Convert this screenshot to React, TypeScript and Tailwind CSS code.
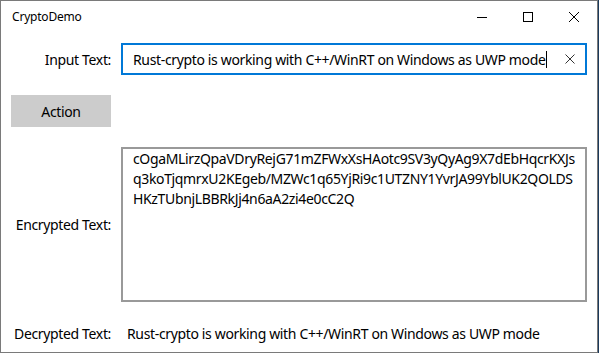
import React from "react";

const font = { fontFamily: '"Noto Sans", "Open Sans", sans-serif' };

export default function App() {
  return (
    <div className="w-[599px] h-[353px] bg-[#1b3a5c] overflow-hidden" style={font}>
      <div className="w-[598px] h-[353px] bg-white border border-[#7a7a7a] flex flex-col text-black">
        {/* Title bar */}
        <div className="h-[31px] flex items-center shrink-0">
          <div className="pl-[11px] text-[12px] tracking-[-0.2px] flex-1">CryptoDemo</div>
          <div className="flex h-full">
            <div className="w-[46px] h-full flex items-center justify-center">
              <svg width="12" height="12" viewBox="0 0 12 12">
                <line x1="1" y1="6.5" x2="11" y2="6.5" stroke="#000" strokeWidth="1" />
              </svg>
            </div>
            <div className="w-[46px] h-full flex items-center justify-center">
              <svg width="12" height="12" viewBox="0 0 12 12">
                <rect x="1.5" y="1.5" width="9" height="9" fill="none" stroke="#000" strokeWidth="1" />
              </svg>
            </div>
            <div className="w-[46px] h-full flex items-center justify-center">
              <svg width="12" height="12" viewBox="0 0 12 12">
                <path d="M1 1 L11 11 M11 1 L1 11" stroke="#000" strokeWidth="1" />
              </svg>
            </div>
          </div>
        </div>

        {/* Input row */}
        <div className="mt-[11px] flex items-center h-[32px]">
          <div className="w-[110px] text-right text-[14px] tracking-[-0.35px]">Input Text:</div>
          <div className="ml-[10px] w-[466px] h-[32px] border-2 border-[#0078d7] flex items-center">
            <div className="pl-[10px] text-[14px] tracking-[-0.35px] whitespace-nowrap flex items-center flex-1">
              <span>Rust-crypto is working with C++/WinRT on Windows as UWP mode</span>
              <span className="inline-block w-[1px] h-[17px] bg-black" />
            </div>
            <div className="w-[30px] flex items-center justify-center">
              <svg width="10" height="10" viewBox="0 0 10 10">
                <path d="M0.5 0.5 L9.5 9.5 M9.5 0.5 L0.5 9.5" stroke="#333" strokeWidth="1" />
              </svg>
            </div>
          </div>
        </div>

        {/* Action button */}
        <div className="mt-[20px] ml-[10px] w-[100px] h-[32px] bg-[#cccccc] flex items-center justify-center text-[14px] tracking-[-0.35px]">
          Action
        </div>

        {/* Encrypted row */}
        <div className="mt-[20px] flex items-center h-[155px]">
          <div className="w-[110px] text-right text-[14px] tracking-[-0.35px]">Encrypted Text:</div>
          <div className="ml-[10px] w-[466px] h-[155px] border-2 border-[#999999] pl-[10px] pr-[6px] pt-[0px]">
            <div className="text-[14px] leading-[20px] tracking-[-0.35px]">
              <div>cOgaMLirzQpaVDryRejG71mZFWxXsHAotc9SV3yQyAg9X7dEbHqcrKXJs</div>
              <div>q3koTjqmrxU2KEgeb/MZWc1q65YjRi9c1UTZNY1YvrJA99YblUK2QOLDS</div>
              <div>HKzTUbnjLBBRkJj4n6aA2zi4e0cC2Q</div>
            </div>
          </div>
        </div>

        {/* Decrypted row */}
        <div className="mt-[21px] flex items-center h-[20px]">
          <div className="w-[110px] text-right text-[14px] tracking-[-0.35px]">Decrypted Text:</div>
          <div className="ml-[16px] text-[14px] tracking-[-0.35px] whitespace-nowrap">
            Rust-crypto is working with C++/WinRT on Windows as UWP mode
          </div>
        </div>
      </div>
    </div>
  );
}
